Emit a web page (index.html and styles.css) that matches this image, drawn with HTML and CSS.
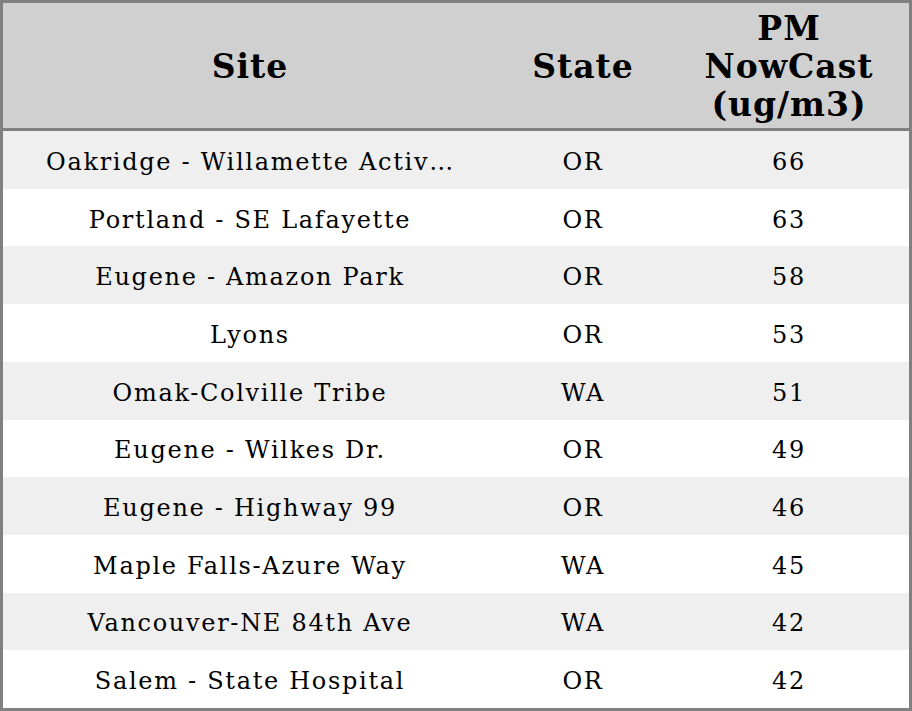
FILE: index.html
```html
<!DOCTYPE html>
<html>
<head>
<meta charset="utf-8">
<link rel="stylesheet" href="styles.css">
</head>
<body>
<div class="table">
  <div class="row head">
    <div class="cell hsite">Site</div>
    <div class="cell state">State</div>
    <div class="cell pm">PM<br>NowCast<br>(ug/m3)</div>
  </div>
  <div class="row odd"><div class="cell site">Oakridge - Willamette Activity Center</div><div class="cell state">OR</div><div class="cell pm">66</div></div>
  <div class="row"><div class="cell site">Portland - SE Lafayette</div><div class="cell state">OR</div><div class="cell pm">63</div></div>
  <div class="row odd"><div class="cell site">Eugene - Amazon Park</div><div class="cell state">OR</div><div class="cell pm">58</div></div>
  <div class="row"><div class="cell site">Lyons</div><div class="cell state">OR</div><div class="cell pm">53</div></div>
  <div class="row odd"><div class="cell site">Omak-Colville Tribe</div><div class="cell state">WA</div><div class="cell pm">51</div></div>
  <div class="row"><div class="cell site">Eugene - Wilkes Dr.</div><div class="cell state">OR</div><div class="cell pm">49</div></div>
  <div class="row odd"><div class="cell site">Eugene - Highway 99</div><div class="cell state">OR</div><div class="cell pm">46</div></div>
  <div class="row"><div class="cell site">Maple Falls-Azure Way</div><div class="cell state">WA</div><div class="cell pm">45</div></div>
  <div class="row odd"><div class="cell site">Vancouver-NE 84th Ave</div><div class="cell state">WA</div><div class="cell pm">42</div></div>
  <div class="row"><div class="cell site">Salem - State Hospital</div><div class="cell state">OR</div><div class="cell pm">42</div></div>
</div>
</body>
</html>
```
FILE: styles.css
```css
html, body {
  margin: 0;
  padding: 0;
  background: #ffffff;
}
body {
  font-family: "DejaVu Serif", serif;
  color: #000;
}
.table {
  width: 912px;
  height: 711px;
  box-sizing: border-box;
  border: 3px solid #808080;
  display: grid;
  grid-template-rows: 128px repeat(10, 1fr);
}
.row {
  display: grid;
  grid-template-columns: 494px 172px 240px;
  align-items: center;
  min-height: 0;
}
.row.head {
  background: #d0d0d0;
  border-bottom: 3px solid #808080;
  font-weight: bold;
  font-size: 33px;
  line-height: 38px;
  letter-spacing: 1px;
  padding-top: 2px;
}
.row.odd {
  background: #efefef;
}
.row:not(.head) {
  font-size: 24px;
  letter-spacing: 1.7px;
  padding-top: 4px;
}
.cell {
  text-align: center;
  min-width: 0;
}
.site {
  padding: 0 43px;
  overflow: hidden;
  white-space: nowrap;
  text-overflow: ellipsis;
}
```
